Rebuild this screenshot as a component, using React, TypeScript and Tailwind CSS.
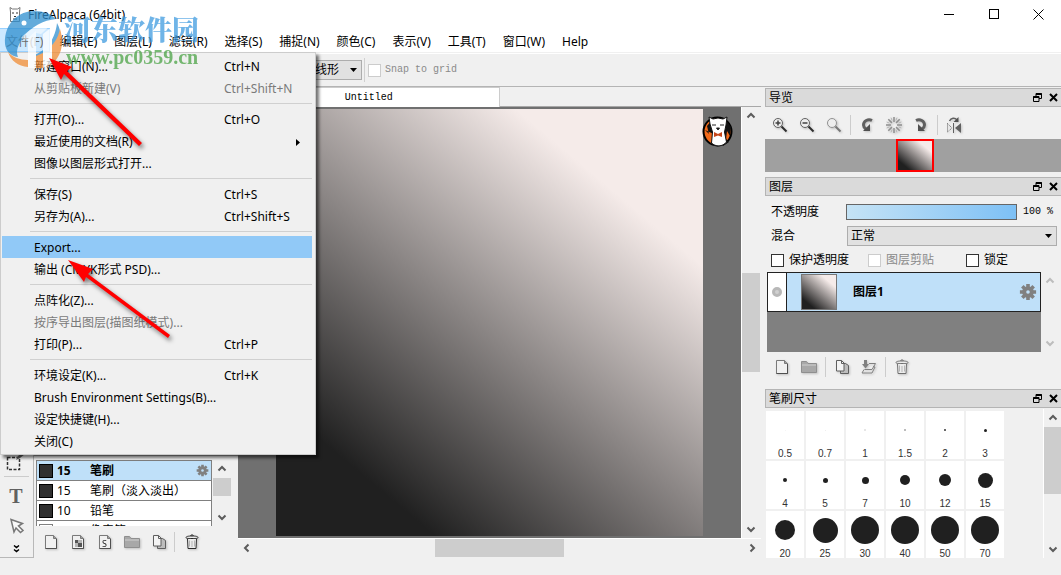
import type { ReactNode } from 'react';
import clsx from 'clsx';

interface MenuEntry {
  label: string;
  shortcut?: string;
  disabled?: boolean;
  active?: boolean;
  submenu?: boolean;
}

const MENUS = ['文件(F)', '编辑(E)', '图层(L)', '滤镜(R)', '选择(S)', '捕捉(N)', '颜色(C)', '表示(V)', '工具(T)', '窗口(W)', 'Help'];

const FILE_MENU: MenuEntry[][] = [
  [
    { label: '新建窗口(N)...', shortcut: 'Ctrl+N' },
    { label: '从剪贴板新建(V)', shortcut: 'Ctrl+Shift+N', disabled: true },
  ],
  [
    { label: '打开(O)...', shortcut: 'Ctrl+O' },
    { label: '最近使用的文档(R)', submenu: true },
    { label: '图像以图层形式打开...' },
  ],
  [
    { label: '保存(S)', shortcut: 'Ctrl+S' },
    { label: '另存为(A)...', shortcut: 'Ctrl+Shift+S' },
  ],
  [{ label: 'Export...', active: true }, { label: '输出 (CMYK形式 PSD)...' }],
  [
    { label: '点阵化(Z)...' },
    { label: '按序导出图层(描图纸模式)...', disabled: true },
    { label: '打印(P)...', shortcut: 'Ctrl+P' },
  ],
  [
    { label: '环境设定(K)...', shortcut: 'Ctrl+K' },
    { label: 'Brush Environment Settings(B)...' },
    { label: '设定快捷键(H)...' },
    { label: '关闭(C)' },
  ],
];

const BRUSHES = [
  { size: '15', name: '笔刷', selected: true },
  { size: '15', name: '笔刷（淡入淡出）' },
  { size: '10', name: '铅笔' },
];

const BRUSH_SIZES = [
  { label: '0.5', dot: 1, alpha: 0.06 },
  { label: '0.7', dot: 1, alpha: 0.1 },
  { label: '1', dot: 2, alpha: 0.15 },
  { label: '1.5', dot: 2, alpha: 0.4 },
  { label: '2', dot: 2, alpha: 0.9 },
  { label: '3', dot: 3, alpha: 1 },
  { label: '4', dot: 4, alpha: 1 },
  { label: '5', dot: 5, alpha: 1 },
  { label: '7', dot: 7, alpha: 1 },
  { label: '10', dot: 10, alpha: 1 },
  { label: '12', dot: 12, alpha: 1 },
  { label: '15', dot: 15, alpha: 1 },
  { label: '20', dot: 20, alpha: 1 },
  { label: '25', dot: 25, alpha: 1 },
  { label: '30', dot: 28, alpha: 1 },
  { label: '40', dot: 28, alpha: 1 },
  { label: '50', dot: 28, alpha: 1 },
  { label: '70', dot: 28, alpha: 1 },
];

type Direction = 'up' | 'down' | 'left' | 'right';

const CHEVRONS: Record<Direction, string> = {
  up: 'M1.5 6.5 5 3 8.5 6.5',
  down: 'M1.5 3.5 5 7 8.5 3.5',
  left: 'M6.5 1.5 3 5 6.5 8.5',
  right: 'M3.5 1.5 7 5 3.5 8.5',
};

function ScrollButton({ direction, faded }: { direction: Direction; faded?: boolean }) {
  return (
    <button type="button" aria-label={`Scroll ${direction}`} className="flex size-[18px] shrink-0 items-center justify-center">
      <svg width="10" height="10" viewBox="0 0 10 10" fill="none" stroke={faded ? '#bdbdbd' : '#5c5c5c'} strokeWidth="2">
        <path d={CHEVRONS[direction]} />
      </svg>
    </button>
  );
}

function IconButton({ label, children }: { label: string; children: ReactNode }) {
  return (
    <button type="button" aria-label={label} className="flex w-[27px] shrink-0 items-center justify-center drop-shadow-[1px_1px_1px_rgba(0,0,0,0.2)]">
      {children}
    </button>
  );
}

function PageIcon({ children }: { children?: ReactNode }) {
  return (
    <svg width="16" height="16" viewBox="0 0 16 16">
      <path d="M2.5 1.500h8l3 3v10h-11z" fill="#f0f0f0" stroke="#7a7a7a" />
      <path d="M10.500 1.500v3h3" fill="#a0a0a0" stroke="#7a7a7a" />
      <path d="M13.500 5v9.500h-11" fill="none" stroke="#4f4f4f" />
      {children}
    </svg>
  );
}

function FolderIcon() {
  return (
    <svg width="18" height="16" viewBox="0 0 18 16">
      <path d="M1.500 13.500v-11h5l1.500 2h8.500v9z" fill="#a8a8a8" stroke="#8f8f8f" />
      <path d="M2 6h14" stroke="#cfcfcf" />
    </svg>
  );
}

function CopyIcon() {
  return (
    <svg width="16" height="16" viewBox="0 0 16 16" stroke="#5f5f5f">
      <path d="M6.500 4.500h5l3 2v8h-8z" fill="#bdbdbd" />
      <path d="M2.500 1.500h5l2.500 2.500v8h-7.500z" fill="#f4f4f4" />
      <path d="M7.500 1.500v3h2.500" fill="none" />
    </svg>
  );
}

function TrashIcon({ dark }: { dark?: boolean }) {
  return (
    <svg width="16" height="16" viewBox="0 0 16 16" stroke={dark ? '#2b2b2b' : '#6e6e6e'} fill="#ececec">
      <path d="M3.500 4.500l.5 10h8l.5-10z" />
      <path d="M2 3.500c0-1 2-1.500 6-1.500s6 .5 6 1.500-2 1-6 1-6 0-6-1z" />
      <path d="M6.500 2c0-1.500 3-1.500 3 0" fill="none" />
      <path d="M5.500 6.500v6M8 7v6M10.500 6.500v6" stroke="#b5b5b5" />
    </svg>
  );
}

function GearIcon({ size }: { size: number }) {
  return (
    <svg width={size} height={size} viewBox="0 0 20 20">
      <g stroke="#808080" strokeWidth="4">
        <path d="M10 1v18M1 10h18M3.700 3.700l12.600 12.600M16.300 3.700 3.700 16.300" />
      </g>
      <circle cx="10" cy="10" r="6.500" fill="#808080" />
      <circle cx="10" cy="10" r="2" fill="#bfe0f9" />
    </svg>
  );
}

function Magnifier({ sign }: { sign?: 'plus' | 'minus' }) {
  return (
    <svg width="16" height="16" viewBox="0 0 16 16" fill="none">
      <circle cx="6" cy="6" r="4.500" fill="#ededed" stroke={sign ? '#606060' : '#909090'} />
      {sign && <path d="M3.500 6h5" stroke="#404040" strokeWidth="1.500" />}
      {sign === 'plus' && <path d="M6 3.500v5" stroke="#404040" strokeWidth="1.500" />}
      <path d="M9.500 9.500l5 5" stroke={sign ? '#2e2e2e' : '#777777'} strokeWidth="2" />
    </svg>
  );
}

function RotateIcon({ flipped }: { flipped?: boolean }) {
  return (
    <svg width="16" height="16" viewBox="0 0 16 16" className={clsx(flipped && '-scale-x-100')}>
      <path d="M13 3.500C9 1.500 4.500 4 4.500 8c0 2 1 3 2.500 4" fill="none" stroke="#606060" strokeWidth="3" />
      <path d="M4 14h7V7z" fill="#505050" />
    </svg>
  );
}

function BurstIcon() {
  return (
    <svg width="18" height="18" viewBox="0 0 18 18" stroke="#8f8f8f" strokeWidth="1.500">
      <path d="M9 1v5M9 12v5M1 9h5M12 9h5M3.300 3.300l3.600 3.600M11.100 11.100l3.600 3.600M14.700 3.300l-3.600 3.600M6.900 11.100l-3.600 3.600" />
      <path d="M6 1.600l1.100 2.900M12 1.600l-1.100 2.900M6 16.400l1.100-2.900M12 16.400l-1.100-2.900M1.600 6l2.900 1.100M1.600 12l2.900-1.100M16.400 6l-2.900 1.100M16.400 12l-2.900-1.100" stroke="#b5b5b5" strokeWidth="1" />
    </svg>
  );
}

function FlipIcon() {
  return (
    <svg width="16" height="18" viewBox="0 0 16 18">
      <path d="M3.500 5C5 1.500 9 1.500 11 4" fill="none" stroke="#606060" strokeWidth="1.500" />
      <path d="M12.500 1v5h-5z" fill="#505050" />
      <path d="M7.500 7v10" stroke="#606060" />
      <path d="M1.500 7.500v8.500l4.500-4z" fill="none" stroke="#606060" strokeDasharray="1 1" />
      <path d="M15 7v10l-6-5z" fill="#606060" />
    </svg>
  );
}

function Separator() {
  return <span className="h-5 w-px shrink-0 bg-[#cccccc]" />;
}

function Panel({ title, children }: { title: string; children: ReactNode }) {
  return (
    <section>
      <div className="flex h-[19px] items-center justify-between border border-r-0 border-[#b4b4b4] bg-[#dadada] pl-[3px]">
        <h2>{title}</h2>
        <div className="flex">
          <button type="button" aria-label={`Float ${title}`} className="flex w-4 justify-center">
            <svg width="9" height="9" viewBox="0 0 9 9" fill="none" stroke="#000">
              <path d="M3 3V.500h5.500v5H6" />
              <path d="M3 1h5.500" strokeWidth="2" />
              <path d="M.500 3.500H6v5H.500z" />
              <path d="M.500 4H6" strokeWidth="2" />
            </svg>
          </button>
          <button type="button" aria-label={`Close ${title}`} className="flex w-4 justify-center">
            <svg width="9" height="9" viewBox="0 0 9 9" stroke="#000" strokeWidth="2">
              <path d="M1 1l7 7M8 1L1 8" />
            </svg>
          </button>
        </div>
      </div>
      {children}
    </section>
  );
}

function CheckField({ label, disabled }: { label: string; disabled?: boolean }) {
  return (
    <label className={clsx('flex items-center gap-[5px] whitespace-nowrap', disabled && 'text-[#8a8a8a]')}>
      <input
        type="checkbox"
        disabled={disabled}
        className="size-[13px] appearance-none border border-[#333333] bg-white disabled:border-[#cccccc]"
      />
      {label}
    </label>
  );
}

function DropArrow() {
  return (
    <svg width="7" height="4" viewBox="0 0 7 4" className="pointer-events-none absolute top-2 right-[5px]">
      <path d="M0 0h7L3.500 4z" />
    </svg>
  );
}

function TitleBar() {
  return (
    <div className="flex h-7 items-center">
      <svg width="14" height="16" viewBox="0 0 14 16" fill="#fff" stroke="#777" className="ml-2">
        <path d="M2.500 15.500V6L2 1.500l2.500 1.500h5L12 1.500 11.500 6v9.500z" />
        <path d="M4 7h2M8 7h2M6 10l1 1 1-1M5 13h4" stroke="#333" />
      </svg>
      <h1 className="ml-1.5 flex-1 pt-0.5">FireAlpaca (64bit)</h1>
      <button type="button" aria-label="Minimize" className="flex h-7 w-[45px] items-center justify-center">
        <span className="h-px w-2.5 bg-black" />
      </button>
      <button type="button" aria-label="Maximize" className="flex h-7 w-[45px] items-center justify-center">
        <span className="size-2.5 border border-black" />
      </button>
      <button type="button" aria-label="Close" className="flex h-7 w-[45px] items-center justify-center">
        <svg width="11" height="11" viewBox="0 0 11 11" stroke="#000">
          <path d="M.500.500l10 10M10.500.500l-10 10" />
        </svg>
      </button>
    </div>
  );
}

function MenuBar() {
  return (
    <nav className="flex h-[25px] gap-px border-b border-[#f0f0f0]">
      {MENUS.map((menu, index) => (
        <button
          key={menu}
          type="button"
          className={clsx(
            'h-6 pt-1 whitespace-nowrap',
            index === 0 ? 'border border-l-0 border-[#99d1ff] bg-[#cce8ff] px-[6px] text-[#6d6d6d]' : 'px-2'
          )}
        >
          {menu}
        </button>
      ))}
    </nav>
  );
}

function FileMenu() {
  return (
    <div
      role="menu"
      className="absolute top-[52px] left-0 z-10 w-[316px] border border-[#cccccc] bg-[#f0f0f0] py-[2px] pr-[3px] pl-px shadow-[3px_3px_3px_rgba(0,0,0,0.55)]"
    >
      {FILE_MENU.map((group, index) => (
        <div key={index}>
          {index > 0 && <div className="my-1 ml-7 h-px bg-[#d0d0d0]" />}
          {group.map((entry) => (
            <button
              key={entry.label}
              type="button"
              role="menuitem"
              className={clsx(
                'flex h-[22px] w-full items-center pt-0.5 pl-8 text-left whitespace-nowrap',
                entry.active && 'bg-[#91c9f7]',
                entry.disabled && 'text-[#7a7a7a]'
              )}
            >
              <span className="w-[190px]">{entry.label}</span>
              <span className="flex-1">{entry.shortcut}</span>
              {entry.submenu && (
                <svg width="4" height="7" viewBox="0 0 4 7" className="mr-3">
                  <path d="M0 0v7l4-3.500z" />
                </svg>
              )}
            </button>
          ))}
        </div>
      ))}
    </div>
  );
}

function ToolStrip() {
  return (
    <div className="flex w-[34px] flex-col items-center justify-end border-r border-b border-[#b8b8b8]">
      <button type="button" aria-label="Select pen" className="flex h-7 items-center">
        <svg width="20" height="20" viewBox="0 0 20 20" fill="none" className="mr-1">
          <path d="M2.500 5.500h12v12h-12z" stroke="#333" strokeWidth="1.500" strokeDasharray="3 1.500" />
          <path d="M11 8l2-4 5-4 2 2-5 4z" fill="#606060" />
        </svg>
      </button>
      <span className="h-px w-[25px] bg-[#cccccc]" />
      <button type="button" aria-label="Text" className="flex h-[34px] items-center pt-1 pr-px font-['Liberation_Serif',serif] text-[20px] font-bold text-[#606060]">
        T
      </button>
      <button type="button" aria-label="Operation" className="flex h-[30px] items-center">
        <svg width="16" height="16" viewBox="0 0 16 16">
          <path d="M2 1.500l11.500 4-4 2.500 4.500 4.500-2.500 2-4.500-4.500-2 4z" fill="#f8f8f8" stroke="#777" strokeWidth="1.500" />
        </svg>
      </button>
      <button type="button" aria-label="More tools" className="flex h-4 items-center">
        <svg width="7" height="8" viewBox="0 0 7 8" fill="none" stroke="#000" strokeWidth="1.500">
          <path d="M1 .500l2.500 2L6 .500M1 4.500l2.500 2L6 4.500" />
        </svg>
      </button>
    </div>
  );
}

function BrushPanel() {
  return (
    <div className="flex min-w-0 flex-1 flex-col justify-end">
      <div className="border-t border-[#a0a0a0] pt-1" />
      <div className="ml-[2px] flex h-[66px]">
        <ul className="w-[176px] overflow-hidden border border-b-0 border-[#808080] bg-white">
          {BRUSHES.map((brush) => (
            <li
              key={brush.size + brush.name}
              className={clsx(
                'flex h-5 items-center border-b border-[#808080] pr-[2px] pl-[2px]',
                brush.selected && 'bg-[#bfe0f9] font-bold'
              )}
            >
              <span className="size-[14px] border border-black bg-[#303030]" />
              <span className="ml-1 w-[33px]">{brush.size}</span>
              <span className="flex-1 whitespace-nowrap">{brush.name}</span>
              {brush.selected && <GearIcon size={13} />}
            </li>
          ))}
          <li className="flex h-5 items-center pl-[2px]">
            <span className="size-[14px] border border-[#808080]" />
            <span className="ml-[37px]">像素笔</span>
          </li>
        </ul>
        <div className="ml-px flex w-[18px] flex-col">
          <ScrollButton direction="up" />
          <div className="h-[18px] bg-[#cdcdcd]" />
          <div className="flex-1" />
          <ScrollButton direction="down" />
        </div>
      </div>
      <div className="flex h-8 items-center pb-px pl-[3px]">
        <IconButton label="New brush">
          <PageIcon />
        </IconButton>
        <IconButton label="New bitmap brush">
          <PageIcon>
            <path d="M5 6h3v3h4v4H8V9H5z" fill="#555" />
            <path d="M8 6h4v3H8zM5 9h3v4H5z" fill="#b5b5b5" />
          </PageIcon>
        </IconButton>
        <IconButton label="New script brush">
          <PageIcon>
            <text x="5" y="12.500" fontSize="9" fill="#222">
              S
            </text>
          </PageIcon>
        </IconButton>
        <IconButton label="New brush folder">
          <FolderIcon />
        </IconButton>
        <IconButton label="Duplicate brush">
          <CopyIcon />
        </IconButton>
        <span className="w-[2px]" />
        <Separator />
        <span className="w-[3px]" />
        <IconButton label="Delete brush">
          <TrashIcon dark />
        </IconButton>
      </div>
    </div>
  );
}

function Mascot() {
  return (
    <svg width="32" height="32" viewBox="0 0 32 32" className="absolute top-[6px] left-full -ml-px">
      <circle cx="15.500" cy="16.500" r="14" fill="#f26a1b" stroke="#000" strokeWidth="2" />
      <path d="M3 15l4 4-2-8 6-7h12l6 8-1 9-3-5-1 8 3 3-6 4-5-10z" fill="#111" />
      <path d="M9.500 28l1-11L8 9 7 2l4 2 5-1 5 1 4-2-1 8-1.500 7 2 10c-4 5-11 5-15 1z" fill="#fff" stroke="#111" />
      <path d="M10 10h4M18 10h4M14.500 13h3l-1.500 2z" stroke="#222" />
      <path d="M12 17l4 2 4-2v5l-4-1.500-4 1.500z" fill="#c6461a" />
    </svg>
  );
}

function Workspace() {
  return (
    <div className="flex min-w-0 flex-1 flex-col">
      <div className="flex h-5 shrink-0">
        <button type="button" className="w-1/2 border border-b-0 border-[#cccccc] bg-white font-['Liberation_Mono',monospace] text-[10px]">
          Untitled
        </button>
        <div className="flex-1 border-b border-[#a8a8a8]" />
      </div>
      <div className="flex min-h-0 flex-1">
        <div className="flex min-w-0 flex-1 bg-[#707070] px-[38px] py-[2px]">
          <div className="relative flex-1 bg-linear-[40deg,#202020_17%,#f5ebe9_80%]">
            <Mascot />
          </div>
        </div>
        <div className="flex w-5 flex-col border-l border-white">
          <ScrollButton direction="up" />
          <div className="grow-3" />
          <div className="w-[18px] grow-2 bg-[#cdcdcd]" />
          <div className="grow-3" />
          <ScrollButton direction="down" />
        </div>
      </div>
      <div className="flex h-5 shrink-0 border-t border-white">
        <ScrollButton direction="left" />
        <div className="grow-7" />
        <div className="h-[18px] grow-5 bg-[#cdcdcd]" />
        <div className="grow-7" />
        <ScrollButton direction="right" />
      </div>
    </div>
  );
}

function NavigatorPanel() {
  return (
    <Panel title="导览">
      <div className="flex h-8 items-center pt-[3px] pl-px">
        <IconButton label="Zoom in">
          <Magnifier sign="plus" />
        </IconButton>
        <IconButton label="Zoom out">
          <Magnifier sign="minus" />
        </IconButton>
        <IconButton label="Fit">
          <Magnifier />
        </IconButton>
        <span className="w-[3px]" />
        <Separator />
        <span className="w-[2px]" />
        <IconButton label="Rotate left">
          <RotateIcon />
        </IconButton>
        <IconButton label="Reset rotation">
          <BurstIcon />
        </IconButton>
        <IconButton label="Rotate right">
          <RotateIcon flipped />
        </IconButton>
        <span className="w-[3px]" />
        <Separator />
        <span className="w-[2px]" />
        <IconButton label="Flip">
          <FlipIcon />
        </IconButton>
      </div>
      <div className="flex h-[33px] justify-center bg-[#a0a0a0] pl-1">
        <div className="w-[38px] border-2 border-[#ff0000] bg-linear-[40deg,#202020_17%,#f5ebe9_80%]" />
      </div>
    </Panel>
  );
}

function LayerPanel() {
  return (
    <Panel title="图层">
      <div className="mt-1 flex h-6 items-center pl-[6px]">
        <label htmlFor="opacity" className="w-[75px]">
          不透明度
        </label>
        <input
          id="opacity"
          type="range"
          defaultValue={100}
          className="h-4 w-[171px] appearance-none border border-[#666666] bg-linear-to-r from-[#c5e3f5] to-[#7dc0f5] [&::-webkit-slider-thumb]:size-0 [&::-webkit-slider-thumb]:appearance-none"
        />
        <output htmlFor="opacity" className="ml-[6px] font-['Liberation_Mono',monospace] text-[10px]">
          100 %
        </output>
      </div>
      <div className="flex h-6 items-center pl-[6px]">
        <label htmlFor="blending" className="w-[76px]">
          混合
        </label>
        <div className="relative w-[210px]">
          <select id="blending" className="block h-5 w-full appearance-none border border-[#adadad] bg-[#e1e1e1] pl-[3px]">
            <option>正常</option>
          </select>
          <DropArrow />
        </div>
      </div>
      <div className="flex h-6 items-center pl-[6px]">
        <div className="w-[97px]">
          <CheckField label="保护透明度" />
        </div>
        <div className="w-[98px]">
          <CheckField label="图层剪贴" disabled />
        </div>
        <CheckField label="锁定" />
      </div>
      <div className="flex h-20">
        <div className="ml-[2px] w-[274px] bg-[#808080]">
          <div className="flex h-10 items-center border border-[#222222] bg-[#bfe0f9]">
            <button type="button" aria-label="Toggle layer" className="flex h-full w-[19px] items-center justify-center border-r border-[#222222] bg-white">
              <span className="size-[10px] rounded-full border-[3px] border-[#b8b8b8] bg-[#d0d0d0]" />
            </button>
            <div className="ml-[14px] size-9 border border-[#777777] bg-linear-[40deg,#202020_17%,#f5ebe9_80%]" />
            <span className="ml-4 flex-1 font-bold">图层1</span>
            <span className="pr-[3px]">
              <GearIcon size={18} />
            </span>
          </div>
        </div>
        <div className="flex w-[18px] flex-col justify-between">
          <ScrollButton direction="up" faded />
          <ScrollButton direction="down" faded />
        </div>
      </div>
      <div className="flex h-8 items-center pb-[2px] pl-[3px]">
        <IconButton label="Add layer">
          <PageIcon />
        </IconButton>
        <IconButton label="Add folder">
          <FolderIcon />
        </IconButton>
        <span className="w-[3px]" />
        <Separator />
        <span className="w-[2px]" />
        <IconButton label="Duplicate layer">
          <CopyIcon />
        </IconButton>
        <IconButton label="Merge layer">
          <svg width="16" height="16" viewBox="0 0 16 16" fill="none" stroke="#808080">
            <path d="M8 4.500h6.500L11 10.500H3.500" />
            <path d="M12 7.500l2 .5-3 6H1l2-3.500" />
            <path d="M4.500 1v5" strokeWidth="3" />
            <path d="M1 5h7L4.500 9.500z" fill="#808080" stroke="none" />
          </svg>
        </IconButton>
        <span className="w-[3px]" />
        <Separator />
        <span className="w-[2px]" />
        <IconButton label="Delete layer">
          <TrashIcon />
        </IconButton>
      </div>
    </Panel>
  );
}

function BrushSizePanel() {
  return (
    <Panel title="笔刷尺寸">
      <div className="flex h-[150px] justify-between overflow-hidden pt-[3px] pl-px">
        <div className="grid auto-rows-[48px] grid-cols-[repeat(6,38px)] gap-[2px]">
          {BRUSH_SIZES.map((size) => (
            <button key={size.label} type="button" className="flex flex-col items-center bg-white">
              <span className="flex h-[38px] items-center">
                <span
                  className="rounded-full bg-[#202020]"
                  style={{ width: size.dot, height: size.dot, opacity: size.alpha }}
                />
              </span>
              <span className="-mt-px h-[10px] font-['Liberation_Sans',sans-serif] text-[10px] leading-[12px] text-[#333333]">{size.label}</span>
            </button>
          ))}
        </div>
        <div className="-mt-[2px] flex w-[18px] flex-col border-l border-white">
          <ScrollButton direction="up" />
          <div className="h-[67px] bg-[#cdcdcd]" />
          <div className="flex-1" />
          <ScrollButton direction="down" />
        </div>
      </div>
    </Panel>
  );
}

function Watermark() {
  return (
    <div className="pointer-events-none absolute top-[10px] left-1 z-20 flex opacity-75">
      <svg width="60" height="60" viewBox="0 0 60 60">
        <path d="M1 34C0 12 16 1 30 1c10 0 17 3 22 8-12 1-26 8-33 19-6 8-7 14-5 19C6 46 2 41 1 34z" fill="#2f8fd0" />
        <path d="M24 47c14-3 27-14 29-34 5 9 4 17 0 22-6 8-16 13-29 12z" fill="#2f8fd0" />
        <path d="M56 19c6 19-2 34-14 38V40c8-5 12-12 14-21z" fill="#f08c35" />
        <path d="M4 42c4 5 12 8 20 8v7C14 56 7 51 4 42zM32 46l7-3v15h-7z" fill="#f08c35" />
        <path d="M24 28l8-7v37h-8zM39 24l9-7v36l-9 5z" fill="#fff" />
        <path d="M17 28c8-9 20-16 35-18L37 24l-5-1-8 7z" fill="#fff" fillOpacity=".7" />
        <circle cx="20" cy="13" r="2.500" fill="#fff" />
      </svg>
      <div className="flex flex-col">
        <span className="h-9 pt-[2px] font-['Noto_Serif_CJK_SC','Noto_Sans_CJK_SC',sans-serif] text-[27px] leading-[34px] font-black text-[#3f9be0]">
          河东软件园
        </span>
        <span className="ml-[2px] font-['Liberation_Serif',serif] text-[20px] leading-[22px] font-bold text-[#4ba346]">www.pc0359.cn</span>
      </div>
    </div>
  );
}

function Pointers() {
  return (
    <svg width="190" height="360" viewBox="0 0 190 360" className="pointer-events-none absolute top-0 left-0 z-30 drop-shadow-[2px_3px_2px_rgba(0,0,0,0.5)]">
      <g fill="#ff0000">
        <path d="M49 58L72 67 67 71 142 143 139 146 64 74 61 80z" />
        <path d="M68 260L93 269 88 274 170 335 168 338 86 277 84 282z" />
      </g>
    </svg>
  );
}

export default function App() {
  return (
    <div className="relative flex h-screen min-h-[560px] flex-col overflow-hidden bg-[#f0f0f0] font-['Noto_Sans','Noto_Sans_CJK_SC',sans-serif] text-[12px] leading-4 text-black">
      <header className="shrink-0 bg-white">
        <TitleBar />
        <MenuBar />
      </header>

      <div className="flex h-[34px] shrink-0 items-center border-t border-b border-t-white border-b-[#b4b4b4] pl-[310px]">
        <div className="relative w-[52px]">
          <select aria-label="Snap shape" className="block h-5 w-full appearance-none border border-[#adadad] bg-[#e1e1e1] pl-1">
            <option>线形</option>
          </select>
          <DropArrow />
        </div>
        <span className="ml-[2px] h-6 w-px bg-[#d0d0d0]" />
        <label className="ml-[3px] flex items-center gap-1 font-['Liberation_Mono',monospace] text-[10px] text-[#8a8a8a]">
          <input type="checkbox" disabled className="size-[13px] appearance-none border border-[#cccccc] bg-white" />
          Snap to grid
        </label>
      </div>

      <main className="flex min-h-0 flex-1 pb-[17px]">
        <div className="flex w-[238px] shrink-0">
          <ToolStrip />
          <BrushPanel />
        </div>
        <Workspace />
        <aside className="ml-1 flex w-[296px] shrink-0 flex-col gap-[5px] pt-px">
          <NavigatorPanel />
          <LayerPanel />
          <BrushSizePanel />
        </aside>
      </main>

      <FileMenu />
      <Watermark />
      <Pointers />
    </div>
  );
}
